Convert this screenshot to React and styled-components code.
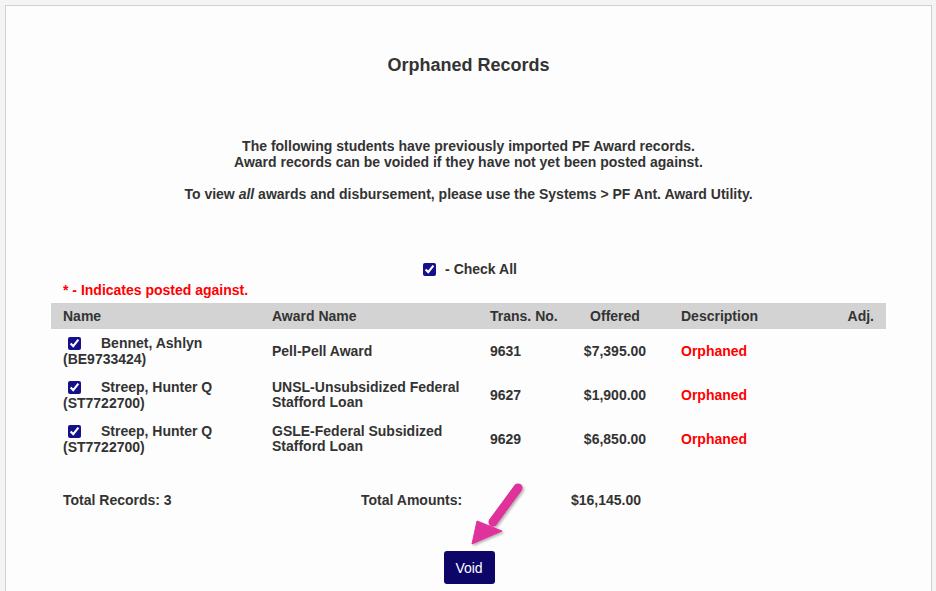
import React from "react";
import styled, { createGlobalStyle } from "styled-components";

const Global = createGlobalStyle`
  html, body { margin: 0; padding: 0; background: #f4f4f4; }
  body { font-family: "Liberation Sans", Arial, sans-serif; color: #333; }
  #root { min-height: 591px; }
`;

const Page = styled.div`
  position: relative;
  padding: 5px 4px 0 5px;
  height: 591px;
  box-sizing: border-box;
  overflow: hidden;
`;

const Panel = styled.div`
  background: #fdfdfd;
  border: 1px solid #cfcfcf;
  border-bottom: none;
  min-height: 620px;
  padding: 49px 45px 0;
  box-sizing: border-box;
  display: flex;
  flex-direction: column;
  align-items: stretch;
`;

const Title = styled.h1`
  margin: 0;
  font-size: 18px;
  line-height: 21px;
  font-weight: bold;
  text-align: center;
  color: #333;
`;

const Intro = styled.div`
  margin-top: 62px;
  font-size: 14px;
  line-height: 16px;
  font-weight: bold;
  text-align: center;
`;

const Gap = styled.div`
  height: ${(p) => p.$h}px;
`;

const CheckAllRow = styled.label`
  margin-top: 59px;
  display: flex;
  justify-content: center;
  align-items: center;
  gap: 9px;
  font-size: 14px;
  line-height: 16px;
  font-weight: bold;
  padding-left: 3px;
`;

const Box = styled.input.attrs({ type: "checkbox" })`
  width: 13px;
  height: 13px;
  margin: 0;
  accent-color: #14108c;
  flex: none;
`;

const Legend = styled.div`
  margin-top: 5px;
  padding-left: 12px;
  color: #ff0000;
  font-size: 14px;
  line-height: 16px;
  font-weight: bold;
`;

const Table = styled.div`
  margin-top: 5px;
  display: grid;
  grid-template-columns: 209px 218px 83px 108px 1fr 86px;
  font-size: 14px;
  font-weight: bold;
  white-space: nowrap;
`;

const Head = styled.div`
  background: #d3d3d3;
  height: 26px;
  display: flex;
  align-items: center;
  padding: 0 12px;
  line-height: 16px;
  justify-content: ${(p) => p.$align || "flex-start"};
`;

const Cell = styled.div`
  height: 44px;
  display: flex;
  flex-direction: column;
  justify-content: center;
  align-items: ${(p) => p.$align || "flex-start"};
  padding: 0 12px;
  line-height: ${(p) => p.$lh || 16}px;
  color: ${(p) => (p.$red ? "#ff0000" : "#333")};
  box-sizing: border-box;
`;

const NameLine = styled.span`
  display: flex;
  align-items: center;
  gap: 20px;
  padding-left: 5px;
`;

const Totals = styled.div`
  margin-top: 31px;
  display: grid;
  grid-template-columns: 310px 210px auto;
  font-size: 14px;
  line-height: 16px;
  font-weight: bold;
  & > :first-child { padding-left: 12px; }
`;

const ButtonRow = styled.div`
  margin-top: 43px;
  display: flex;
  justify-content: center;
  padding-left: 1px;
`;

const VoidButton = styled.button`
  width: 51px;
  height: 33px;
  background: #0d0668;
  color: #fff;
  border: none;
  border-radius: 3px;
  font-family: "Liberation Sans", Arial, sans-serif;
  font-size: 14px;
  padding: 0;
  cursor: pointer;
`;

const Arrow = styled.svg`
  position: absolute;
  left: 440px;
  top: 478px;
  width: 100px;
  height: 80px;
  overflow: visible;
  pointer-events: none;
`;

const rows = [
  { name: "Bennet, Ashlyn", id: "(BE9733424)", award: ["Pell-Pell Award"], trans: "9631", offered: "$7,395.00" },
  { name: "Streep, Hunter Q", id: "(ST7722700)", award: ["UNSL-Unsubsidized Federal", "Stafford Loan"], trans: "9627", offered: "$1,900.00" },
  { name: "Streep, Hunter Q", id: "(ST7722700)", award: ["GSLE-Federal Subsidized", "Stafford Loan"], trans: "9629", offered: "$6,850.00" },
];

export default function App() {
  return (
    <>
      <Global />
      <Page>
        <Panel>
          <Title>Orphaned Records</Title>
          <Intro>
            The following students have previously imported PF Award records.
            <br />
            Award records can be voided if they have not yet been posted against.
            <Gap $h={16} />
            To view <i>all</i> awards and disbursement, please use the Systems &gt; PF Ant. Award Utility.
          </Intro>
          <CheckAllRow>
            <Box defaultChecked />
            <span>- Check All</span>
          </CheckAllRow>
          <Legend>* - Indicates posted against.</Legend>
          <Table>
            <Head>Name</Head>
            <Head>Award Name</Head>
            <Head>Trans. No.</Head>
            <Head $align="center">Offered</Head>
            <Head>Description</Head>
            <Head $align="flex-end">Adj.</Head>
            {rows.map((r, i) => (
              <React.Fragment key={i}>
                <Cell>
                  <NameLine>
                    <Box defaultChecked />
                    <span>{r.name}</span>
                  </NameLine>
                  <span>{r.id}</span>
                </Cell>
                <Cell $lh={15}>
                  {r.award.map((a) => (
                    <span key={a}>{a}</span>
                  ))}
                </Cell>
                <Cell>{r.trans}</Cell>
                <Cell $align="center">{r.offered}</Cell>
                <Cell $red>Orphaned</Cell>
                <Cell $align="flex-end"></Cell>
              </React.Fragment>
            ))}
          </Table>
          <Totals>
            <span>Total Records: 3</span>
            <span>Total Amounts:</span>
            <span>$16,145.00</span>
          </Totals>
          <ButtonRow>
            <VoidButton>Void</VoidButton>
          </ButtonRow>
        </Panel>
        <Arrow viewBox="0 0 100 80">
          <defs>
            <filter id="sh" x="-30%" y="-30%" width="160%" height="160%">
              <feDropShadow dx="1.5" dy="1.5" stdDeviation="1.2" floodColor="#000" floodOpacity="0.3" />
            </filter>
          </defs>
          <g filter="url(#sh)" fill="#e0309b" stroke="#e0309b">
            <line x1="78" y1="10" x2="53" y2="44" strokeWidth="9" strokeLinecap="round" />
            <polygon points="32,66 37,43 62,53" strokeWidth="1" strokeLinejoin="round" />
          </g>
        </Arrow>
      </Page>
    </>
  );
}
